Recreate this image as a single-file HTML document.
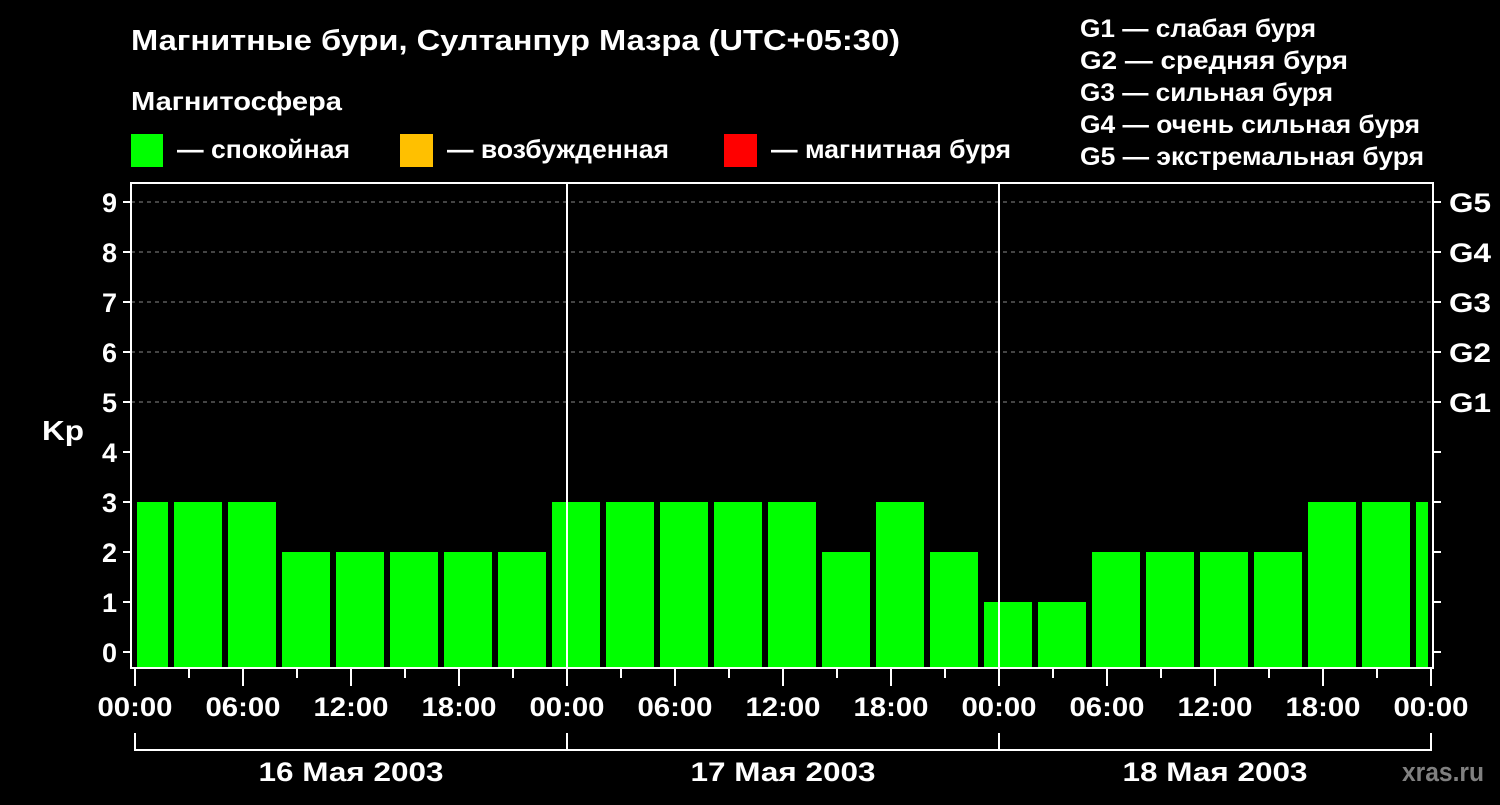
<!DOCTYPE html>
<html><head><meta charset="utf-8"><style>
body{margin:0;background:#000;width:1500px;height:800px;overflow:hidden}
svg text{font-family:"Liberation Sans",sans-serif;font-weight:bold;fill:#fff}
</style></head><body>
<svg width="1500" height="800" xmlns="http://www.w3.org/2000/svg">
<text x="131" y="50" font-size="29" textLength="769" lengthAdjust="spacingAndGlyphs">Магнитные бури, Султанпур Мазра (UTC+05:30)</text>
<text x="131" y="110" font-size="26" textLength="211" lengthAdjust="spacingAndGlyphs">Магнитосфера</text>
<rect x="131" y="134" width="32" height="33" fill="#00ff00"/>
<text x="177" y="158" font-size="26" textLength="173" lengthAdjust="spacingAndGlyphs">— спокойная</text>
<rect x="400" y="134" width="33" height="33" fill="#ffc000"/>
<text x="447" y="158" font-size="26" textLength="222" lengthAdjust="spacingAndGlyphs">— возбужденная</text>
<rect x="724" y="134" width="33" height="33" fill="#ff0000"/>
<text x="771" y="158" font-size="26" textLength="240" lengthAdjust="spacingAndGlyphs">— магнитная буря</text>
<g font-size="25">
<text x="1080" y="37" textLength="236" lengthAdjust="spacingAndGlyphs">G1 — слабая буря</text>
<text x="1080" y="69" textLength="268" lengthAdjust="spacingAndGlyphs">G2 — средняя буря</text>
<text x="1080" y="101" textLength="253" lengthAdjust="spacingAndGlyphs">G3 — сильная буря</text>
<text x="1080" y="133" textLength="340" lengthAdjust="spacingAndGlyphs">G4 — очень сильная буря</text>
<text x="1080" y="165" textLength="344" lengthAdjust="spacingAndGlyphs">G5 — экстремальная буря</text>
</g>
<g stroke="#888" stroke-width="1" stroke-dasharray="4,4">
<line x1="131" y1="202" x2="1433" y2="202"/><line x1="131" y1="252" x2="1433" y2="252"/>
<line x1="131" y1="302" x2="1433" y2="302"/><line x1="131" y1="352" x2="1433" y2="352"/>
<line x1="131" y1="402" x2="1433" y2="402"/>
</g>
<g fill="#00ff00">
<rect x="137" y="502" width="31" height="166"/>
<rect x="174" y="502" width="48" height="166"/>
<rect x="228" y="502" width="48" height="166"/>
<rect x="282" y="552" width="48" height="116"/>
<rect x="336" y="552" width="48" height="116"/>
<rect x="390" y="552" width="48" height="116"/>
<rect x="444" y="552" width="48" height="116"/>
<rect x="498" y="552" width="48" height="116"/>
<rect x="552" y="502" width="48" height="166"/>
<rect x="606" y="502" width="48" height="166"/>
<rect x="660" y="502" width="48" height="166"/>
<rect x="714" y="502" width="48" height="166"/>
<rect x="768" y="502" width="48" height="166"/>
<rect x="822" y="552" width="48" height="116"/>
<rect x="876" y="502" width="48" height="166"/>
<rect x="930" y="552" width="48" height="116"/>
<rect x="984" y="602" width="48" height="66"/>
<rect x="1038" y="602" width="48" height="66"/>
<rect x="1092" y="552" width="48" height="116"/>
<rect x="1146" y="552" width="48" height="116"/>
<rect x="1200" y="552" width="48" height="116"/>
<rect x="1254" y="552" width="48" height="116"/>
<rect x="1308" y="502" width="48" height="166"/>
<rect x="1362" y="502" width="48" height="166"/>
<rect x="1416" y="502" width="12" height="166"/>
</g>
<g stroke="#fff" stroke-width="2" fill="none">
<rect x="131" y="183" width="1302" height="485"/>
<line x1="567" y1="183" x2="567" y2="668"/><line x1="999" y1="183" x2="999" y2="668"/>
<path d="M123 202h8M123 252h8M123 302h8M123 352h8M123 402h8M123 452h8M123 502h8M123 552h8M123 602h8M123 652h8"/>
<path d="M1433 202h8M1433 252h8M1433 302h8M1433 352h8M1433 402h8M1433 452h8M1433 502h8M1433 552h8M1433 602h8M1433 652h8"/>
<path d="M135 668v18M243 668v18M351 668v18M459 668v18M567 668v18M675 668v18M783 668v18M891 668v18M999 668v18M1107 668v18M1215 668v18M1323 668v18M1431 668v18"/>
<path d="M189 668v10M297 668v10M405 668v10M513 668v10M621 668v10M729 668v10M837 668v10M945 668v10M1053 668v10M1161 668v10M1269 668v10M1377 668v10"/>
<path d="M135 733v17h1296v-17M567 733v17M999 733v17"/>
</g>
<g font-size="27" text-anchor="end">
<text x="117" y="212">9</text><text x="117" y="262">8</text><text x="117" y="312">7</text>
<text x="117" y="362">6</text><text x="117" y="412">5</text><text x="117" y="462">4</text>
<text x="117" y="512">3</text><text x="117" y="562">2</text><text x="117" y="612">1</text>
<text x="117" y="662">0</text>
</g>
<text x="42" y="440" font-size="28" textLength="42" lengthAdjust="spacingAndGlyphs">Kp</text>
<g font-size="27">
<text x="1449" y="212" textLength="42" lengthAdjust="spacingAndGlyphs">G5</text><text x="1449" y="262" textLength="42" lengthAdjust="spacingAndGlyphs">G4</text><text x="1449" y="312" textLength="42" lengthAdjust="spacingAndGlyphs">G3</text>
<text x="1449" y="362" textLength="42" lengthAdjust="spacingAndGlyphs">G2</text><text x="1449" y="412" textLength="42" lengthAdjust="spacingAndGlyphs">G1</text>
</g>
<g font-size="27" text-anchor="middle">
<text x="135" y="716" textLength="75" lengthAdjust="spacingAndGlyphs">00:00</text><text x="243" y="716" textLength="75" lengthAdjust="spacingAndGlyphs">06:00</text><text x="351" y="716" textLength="75" lengthAdjust="spacingAndGlyphs">12:00</text>
<text x="459" y="716" textLength="75" lengthAdjust="spacingAndGlyphs">18:00</text><text x="567" y="716" textLength="75" lengthAdjust="spacingAndGlyphs">00:00</text><text x="675" y="716" textLength="75" lengthAdjust="spacingAndGlyphs">06:00</text>
<text x="783" y="716" textLength="75" lengthAdjust="spacingAndGlyphs">12:00</text><text x="891" y="716" textLength="75" lengthAdjust="spacingAndGlyphs">18:00</text><text x="999" y="716" textLength="75" lengthAdjust="spacingAndGlyphs">00:00</text>
<text x="1107" y="716" textLength="75" lengthAdjust="spacingAndGlyphs">06:00</text><text x="1215" y="716" textLength="75" lengthAdjust="spacingAndGlyphs">12:00</text><text x="1323" y="716" textLength="75" lengthAdjust="spacingAndGlyphs">18:00</text>
<text x="1431" y="716" textLength="75" lengthAdjust="spacingAndGlyphs">00:00</text>
<text x="351" y="781" textLength="185" lengthAdjust="spacingAndGlyphs">16 Мая 2003</text><text x="783" y="781" textLength="185" lengthAdjust="spacingAndGlyphs">17 Мая 2003</text><text x="1215" y="781" textLength="185" lengthAdjust="spacingAndGlyphs">18 Мая 2003</text>
</g>
<text x="1402" y="781" font-size="27" textLength="82" lengthAdjust="spacingAndGlyphs" style="fill:#808080">xras.ru</text>
</svg>
</body></html>
